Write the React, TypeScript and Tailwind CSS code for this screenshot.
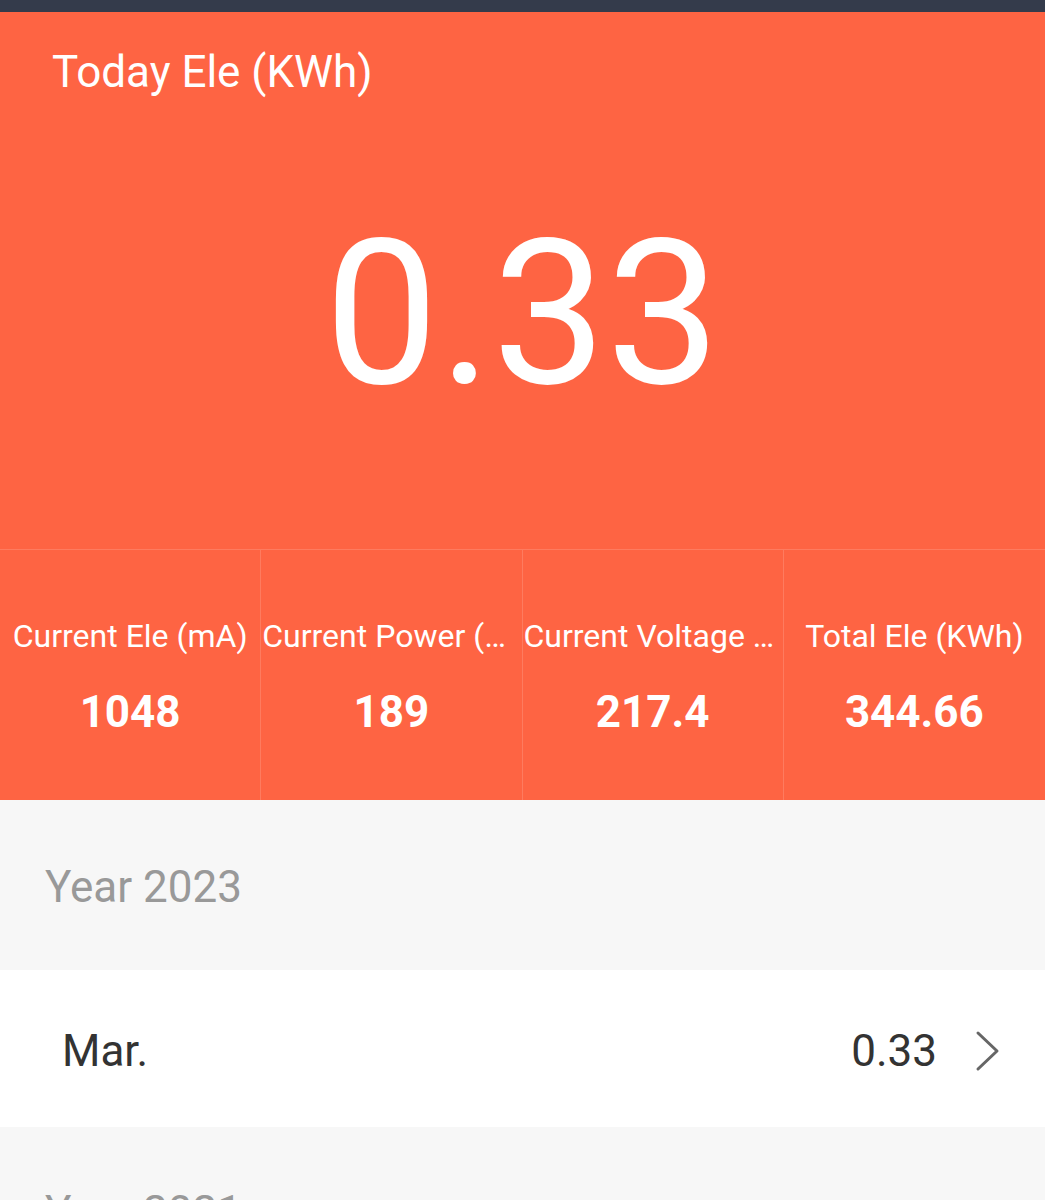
const stats = [
  { label: "Current Ele (mA)", value: "1048" },
  { label: "Current Power (W)", value: "189" },
  { label: "Current Voltage (V)", value: "217.4" },
  { label: "Total Ele (KWh)", value: "344.66" },
]

export default function App() {
  return (
    <div className="w-[1045px] h-[1200px] overflow-hidden bg-[#f7f7f7] font-['Roboto',sans-serif]">
      {/* status strip */}
      <div className="h-[12px] bg-[#343b4b]" />

      {/* HEADER */}
      <div className="bg-[#fe6443] text-white">
        <div className="h-[537px] flex flex-col">
          <div className="pl-[52px] pt-[34px] text-[44px] leading-[52px]">
            Today Ele (KWh)
          </div>
          <div className="flex-1 flex items-center justify-center pb-[18px]">
            <span className="text-[203px] leading-none">0.33</span>
          </div>
        </div>

        {/* STATS */}
        <div className="grid grid-cols-4 border-t border-white/15 h-[251px]">
          {stats.map((s, i) => (
            <div
              key={s.label}
              className={`flex flex-col items-center justify-center gap-[32px] px-[1px] pt-[4px] ${
                i < 3 ? "border-r border-white/15" : ""
              }`}
            >
              <div className="w-full text-center text-[32px] leading-[38px] truncate">
                {s.label}
              </div>
              <div className="text-[44px] leading-[50px] font-bold">
                {s.value}
              </div>
            </div>
          ))}
        </div>
      </div>

      {/* YEAR 2023 */}
      <div className="h-[170px] flex items-center pl-[45px] pt-[4px] text-[44px] text-[#999999]">
        Year 2023
      </div>

      <div className="h-[157px] bg-white flex items-center pl-[62px] pr-[44px] pt-[4px]">
        <span className="text-[44px] text-[#333333]">Mar.</span>
        <span className="ml-auto text-[44px] text-[#333333]">0.33</span>
        <svg
          className="ml-[38px]"
          width="26"
          height="42"
          viewBox="0 0 26 42"
          fill="none"
        >
          <polyline
            points="3,3 22,21 3,39"
            stroke="#666666"
            strokeWidth="3"
            strokeLinecap="round"
            strokeLinejoin="round"
          />
        </svg>
      </div>

      {/* YEAR 2021 */}
      <div className="pt-[59px] pl-[45px] text-[44px] leading-[52px] text-[#999999]">
        Year 2021
      </div>
    </div>
  )
}
